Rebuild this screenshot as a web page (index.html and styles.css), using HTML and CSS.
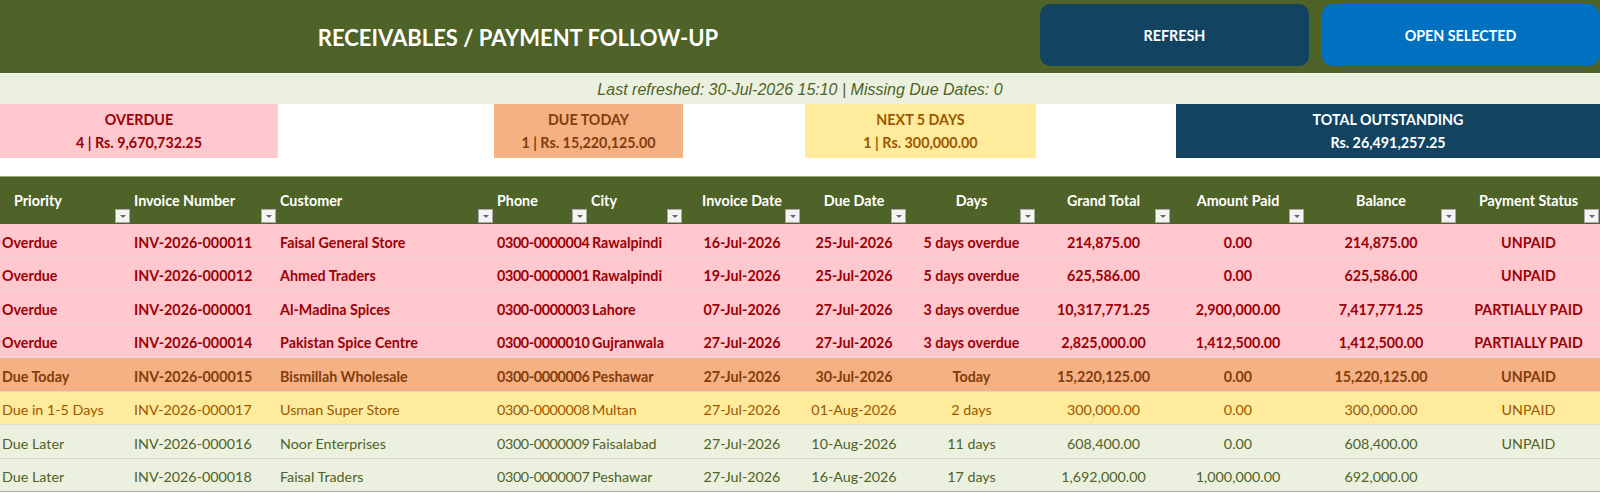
FILE: index.html
```html
<!DOCTYPE html>
<html>
<head>
<meta charset="utf-8">
<link rel="stylesheet" href="styles.css">
</head>
<body>
<div class="page">
  <div class="topbar">
    <div class="title">RECEIVABLES / PAYMENT FOLLOW-UP</div>
    <div class="btn btn-refresh">REFRESH</div>
    <div class="btn btn-open">OPEN SELECTED</div>
  </div>
  <div class="refreshed">Last refreshed: 30-Jul-2026 15:10 | Missing Due Dates: 0</div>
  <div class="kpis cols">
    <div class="kpi kpi-overdue"><div>OVERDUE</div><div>4 | Rs. 9,670,732.25</div></div>
    <div class="kpi kpi-today"><div>DUE TODAY</div><div>1 | Rs. 15,220,125.00</div></div>
    <div class="kpi kpi-next"><div>NEXT 5 DAYS</div><div>1 | Rs. 300,000.00</div></div>
    <div class="kpi kpi-total"><div>TOTAL OUTSTANDING</div><div>Rs. 26,491,257.25</div></div>
  </div>
  <div class="table">
    <div class="thead cols">
      <div class="th first">Priority<span class="filter"></span></div>
      <div class="th">Invoice Number<span class="filter"></span></div>
      <div class="th">Customer<span class="filter"></span></div>
      <div class="th">Phone<span class="filter"></span></div>
      <div class="th">City<span class="filter"></span></div>
      <div class="th c">Invoice Date<span class="filter"></span></div>
      <div class="th c">Due Date<span class="filter"></span></div>
      <div class="th c">Days<span class="filter"></span></div>
      <div class="th c">Grand Total<span class="filter"></span></div>
      <div class="th c">Amount Paid<span class="filter"></span></div>
      <div class="th c">Balance<span class="filter"></span></div>
      <div class="th c">Payment Status<span class="filter"></span></div>
    </div>

    <div class="tr cols overdue">
      <div class="td">Overdue</div><div class="td">INV-2026-000011</div><div class="td">Faisal General Store</div><div class="td phone">0300-0000004</div><div class="td">Rawalpindi</div>
      <div class="td c">16-Jul-2026</div><div class="td c">25-Jul-2026</div><div class="td c">5 days overdue</div><div class="td c">214,875.00</div><div class="td c">0.00</div><div class="td c">214,875.00</div><div class="td c">UNPAID</div>
    </div>
    <div class="tr cols overdue">
      <div class="td">Overdue</div><div class="td">INV-2026-000012</div><div class="td">Ahmed Traders</div><div class="td phone">0300-0000001</div><div class="td">Rawalpindi</div>
      <div class="td c">19-Jul-2026</div><div class="td c">25-Jul-2026</div><div class="td c">5 days overdue</div><div class="td c">625,586.00</div><div class="td c">0.00</div><div class="td c">625,586.00</div><div class="td c">UNPAID</div>
    </div>
    <div class="tr cols overdue">
      <div class="td">Overdue</div><div class="td">INV-2026-000001</div><div class="td">Al-Madina Spices</div><div class="td phone">0300-0000003</div><div class="td">Lahore</div>
      <div class="td c">07-Jul-2026</div><div class="td c">27-Jul-2026</div><div class="td c">3 days overdue</div><div class="td c">10,317,771.25</div><div class="td c">2,900,000.00</div><div class="td c">7,417,771.25</div><div class="td c">PARTIALLY PAID</div>
    </div>
    <div class="tr cols overdue">
      <div class="td">Overdue</div><div class="td">INV-2026-000014</div><div class="td">Pakistan Spice Centre</div><div class="td phone">0300-0000010</div><div class="td">Gujranwala</div>
      <div class="td c">27-Jul-2026</div><div class="td c">27-Jul-2026</div><div class="td c">3 days overdue</div><div class="td c">2,825,000.00</div><div class="td c">1,412,500.00</div><div class="td c">1,412,500.00</div><div class="td c">PARTIALLY PAID</div>
    </div>
    <div class="tr cols today">
      <div class="td">Due Today</div><div class="td">INV-2026-000015</div><div class="td">Bismillah Wholesale</div><div class="td phone">0300-0000006</div><div class="td">Peshawar</div>
      <div class="td c">27-Jul-2026</div><div class="td c">30-Jul-2026</div><div class="td c">Today</div><div class="td c">15,220,125.00</div><div class="td c">0.00</div><div class="td c">15,220,125.00</div><div class="td c">UNPAID</div>
    </div>
    <div class="tr cols soon">
      <div class="td">Due in 1-5 Days</div><div class="td">INV-2026-000017</div><div class="td">Usman Super Store</div><div class="td phone">0300-0000008</div><div class="td">Multan</div>
      <div class="td c">27-Jul-2026</div><div class="td c">01-Aug-2026</div><div class="td c">2 days</div><div class="td c">300,000.00</div><div class="td c">0.00</div><div class="td c">300,000.00</div><div class="td c">UNPAID</div>
    </div>
    <div class="tr cols later">
      <div class="td">Due Later</div><div class="td">INV-2026-000016</div><div class="td">Noor Enterprises</div><div class="td phone">0300-0000009</div><div class="td">Faisalabad</div>
      <div class="td c">27-Jul-2026</div><div class="td c">10-Aug-2026</div><div class="td c">11 days</div><div class="td c">608,400.00</div><div class="td c">0.00</div><div class="td c">608,400.00</div><div class="td c">UNPAID</div>
    </div>
    <div class="tr cols later last">
      <div class="td">Due Later</div><div class="td">INV-2026-000018</div><div class="td">Faisal Traders</div><div class="td phone">0300-0000007</div><div class="td">Peshawar</div>
      <div class="td c">27-Jul-2026</div><div class="td c">16-Aug-2026</div><div class="td c">17 days</div><div class="td c">1,692,000.00</div><div class="td c">1,000,000.00</div><div class="td c">692,000.00</div><div class="td c"></div>
    </div>
  </div>
</div>
</body>
</html>
```
FILE: styles.css
```css
* { box-sizing: border-box; }
html, body { margin: 0; padding: 0; background: #ffffff; }
body {
  font-family: Lato, "Open Sans", sans-serif;
  font-size: 14.3px;
  width: 1600px;
  height: 494px;
  overflow: hidden;
}
.page { width: 1600px; }

.cols {
  display: grid;
  grid-template-columns: 131px 146px 217px 94px 95px 118px 106px 129px 135px 134px 152px 143px;
}

/* top bar */
.topbar {
  height: 73px;
  background: #4f6228;
  display: flex;
  align-items: flex-start;
}
.title {
  width: 1036px;
  height: 73px;
  display: flex;
  align-items: center;
  justify-content: center;
  color: #ffffff;
  font-weight: bold;
  font-size: 22px;
  padding-top: 1px;
}
.btn {
  margin-top: 4px;
  height: 62px;
  border-radius: 10px;
  display: flex;
  align-items: center;
  justify-content: center;
  color: #ffffff;
  font-weight: bold;
  font-size: 14.3px;
}
.btn-refresh {
  margin-left: 4px;
  width: 269px;
  background: #124461;
}
.btn-open {
  margin-left: 13px;
  width: 277px;
  background: #0070c0;
}

/* refreshed band */
.refreshed {
  height: 31px;
  background: #ebf1de;
  border-top: 1px solid #f4f7ed;
  display: flex;
  align-items: center;
  justify-content: center;
  font-family: "Liberation Sans", Arial, sans-serif;
  font-style: italic;
  font-size: 16px;
  color: #4f6228;
  padding-top: 1px;
}

/* KPI cards */
.kpis {
  height: 54px;
  margin-bottom: 18px;
}
.kpi {
  display: flex;
  flex-direction: column;
  align-items: center;
  justify-content: center;
  gap: 6px;
  font-weight: bold;
  padding-bottom: 1px;
}
.kpi-overdue { grid-column: 1 / 3; background: #ffc7ce; color: #9c0006; margin-right: -1px; }
.kpi-today { grid-column: 4 / 6; background: #f4b183; color: #843c0c; }
.kpi-next { grid-column: 7 / 9; background: #ffeb9c; color: #9c5700; margin-left: 4px; }
.kpi-total { grid-column: 10 / 13; background: #124461; color: #ffffff; margin-left: 5px; }

/* table */
.table { border-top: 1px solid #9aab78; }
.thead {
  height: 47px;
  background: #4f6228;
}
.th {
  position: relative;
  color: #ffffff;
  font-weight: bold;
  padding: 15px 0 0 3px;
  white-space: nowrap;
}
.th.first { padding-left: 14px; }
.th.c { text-align: center; padding-left: 0; }
.filter {
  position: absolute;
  right: 1px;
  bottom: 1px;
  width: 15px;
  height: 14px;
  background: #f4f4f4;
  border: 1px solid #a9a9a9;
}
.filter::after {
  content: "";
  position: absolute;
  left: 4px;
  top: 5px;
  border-left: 3px solid transparent;
  border-right: 3px solid transparent;
  border-top: 3px solid #666666;
}

.tr {
  height: 33.5px;
  border-bottom: 1px solid #dedede;
}
.td {
  display: flex;
  align-items: center;
  padding: 4px 0 0 3px;
  white-space: nowrap;
}
.td:first-child { padding-left: 2px; }
.td:nth-child(5) { padding-left: 4px; }
.td.phone { letter-spacing: -0.35px; }
.td.c { justify-content: center; padding-left: 0; }

.overdue { background: #ffc7ce; color: #9c0006; font-weight: bold; border-bottom-color: #ead7d9; }
.today { background: #f4b183; color: #843c0c; font-weight: bold; border-bottom-color: #e6d2c5; }
.soon { background: #ffeb9c; color: #9c5700; border-bottom-color: #dcdcd0; }
.later { background: #ebf1de; color: #4f6228; border-bottom-color: #d4dac8; }
.later.last { border-bottom-color: #a6a6a6; }
```
